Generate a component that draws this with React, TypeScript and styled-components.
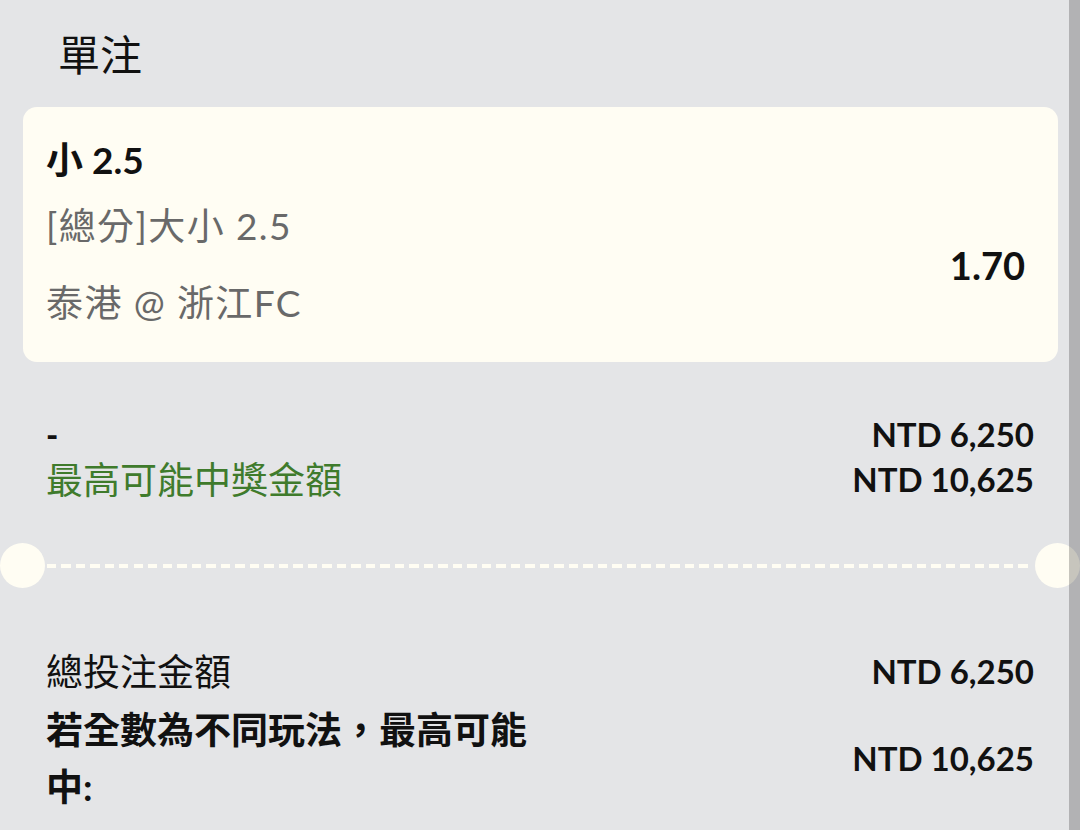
import styled, { createGlobalStyle } from "styled-components";

const GlobalStyle = createGlobalStyle`
    * {
        box-sizing: border-box;
    }

    body {
        margin: 0;
        background-color: #e4e5e7;
        font-family: Lato, "Noto Sans CJK TC", sans-serif;
        color: #111;
    }
`;

const Page = styled.div`
    position: relative;
    width: 1080px;
    height: 830px;
    overflow: hidden;
    background-color: #e4e5e7;
`;

const Heading = styled.h1`
    margin: 0;
    padding: 30px 0 0 58px;
    font-size: 42px;
    line-height: 50px;
    font-weight: 400;
    color: #111;
`;

const Card = styled.div`
    margin: 27px 22px 0 23px;
    padding: 31px 33px 34px 23px;
    border-radius: 14px;
    background-color: #fffdf3;
`;

const Selection = styled.div`
    font-size: 37px;
    line-height: 44px;
    font-weight: 700;
    color: #111;
`;

const CardBody = styled.div`
    display: flex;
    align-items: center;
    justify-content: space-between;
    margin-top: 19px;
`;

const MarketInfo = styled.div`
    display: flex;
    flex-direction: column;
    gap: 27px;
    font-size: 37px;
    line-height: 50px;
    letter-spacing: 1.4px;
    color: #696969;
`;

const Odds = styled.div`
    font-size: 38px;
    font-weight: 700;
    color: #111;
`;

const Summary = styled.div<{ $top: number }>`
    display: flex;
    flex-direction: column;
    margin-top: ${props => props.$top}px;
    padding: 0 46px 0 46px;
`;

const Row = styled.div<{ $gap?: number }>`
    display: flex;
    align-items: center;
    justify-content: space-between;
    margin-top: ${props => props.$gap ?? 0}px;
`;

const Label = styled.div<{ $tone?: "plain" | "green" | "strong" }>`
    flex: 0 1 50%;
    font-size: 37px;
    line-height: ${props => (props.$tone === "strong" ? 57 : 45)}px;
    font-weight: ${props => (props.$tone === "strong" ? 700 : 400)};
    color: ${props => (props.$tone === "green" ? "#3f7b2c" : "#111")};
`;

const Dash = styled.div`
    font-size: 33px;
    line-height: 45px;
    font-weight: 900;
`;

const Amount = styled.div`
    font-size: 33px;
    line-height: 45px;
    font-weight: 700;
    white-space: nowrap;
    color: #111;
`;

const Divider = styled.div`
    display: flex;
    align-items: center;
    margin-top: 41px;
    height: 45px;
`;

const Notch = styled.div`
    flex: 0 0 45px;
    height: 45px;
    border-radius: 50%;
    background-color: #fffdf3;
`;

const DashedLine = styled.div`
    flex: 1;
    height: 4px;
    margin: 0 2px;
    background-image: repeating-linear-gradient(
        to right,
        #fffdf3 0,
        #fffdf3 9px,
        transparent 9px,
        transparent 14.5px
    );
`;

const ScrollShade = styled.div`
    position: absolute;
    top: 0;
    right: 0;
    width: 11px;
    height: 100%;
    background-color: rgba(0, 0, 0, 0.22);
`;

function App() {
    return (
        <Page>
            <GlobalStyle />
            <Heading>單注</Heading>
            <Card>
                <Selection>小 2.5</Selection>
                <CardBody>
                    <MarketInfo>
                        <span>[總分]大小 2.5</span>
                        <span>泰港 @ 浙江FC</span>
                    </MarketInfo>
                    <Odds>1.70</Odds>
                </CardBody>
            </Card>

            <Summary $top={50}>
                <Row>
                    <Dash>-</Dash>
                    <Amount>NTD 6,250</Amount>
                </Row>
                <Row>
                    <Label $tone="green">最高可能中獎金額</Label>
                    <Amount>NTD 10,625</Amount>
                </Row>
            </Summary>

            <Divider>
                <Notch />
                <DashedLine />
                <Notch />
            </Divider>

            <Summary $top={61}>
                <Row>
                    <Label>總投注金額</Label>
                    <Amount>NTD 6,250</Amount>
                </Row>
                <Row $gap={7}>
                    <Label $tone="strong">若全數為不同玩法，最高可能中:</Label>
                    <Amount>NTD 10,625</Amount>
                </Row>
            </Summary>
            <ScrollShade />
        </Page>
    );
}

export default App;
